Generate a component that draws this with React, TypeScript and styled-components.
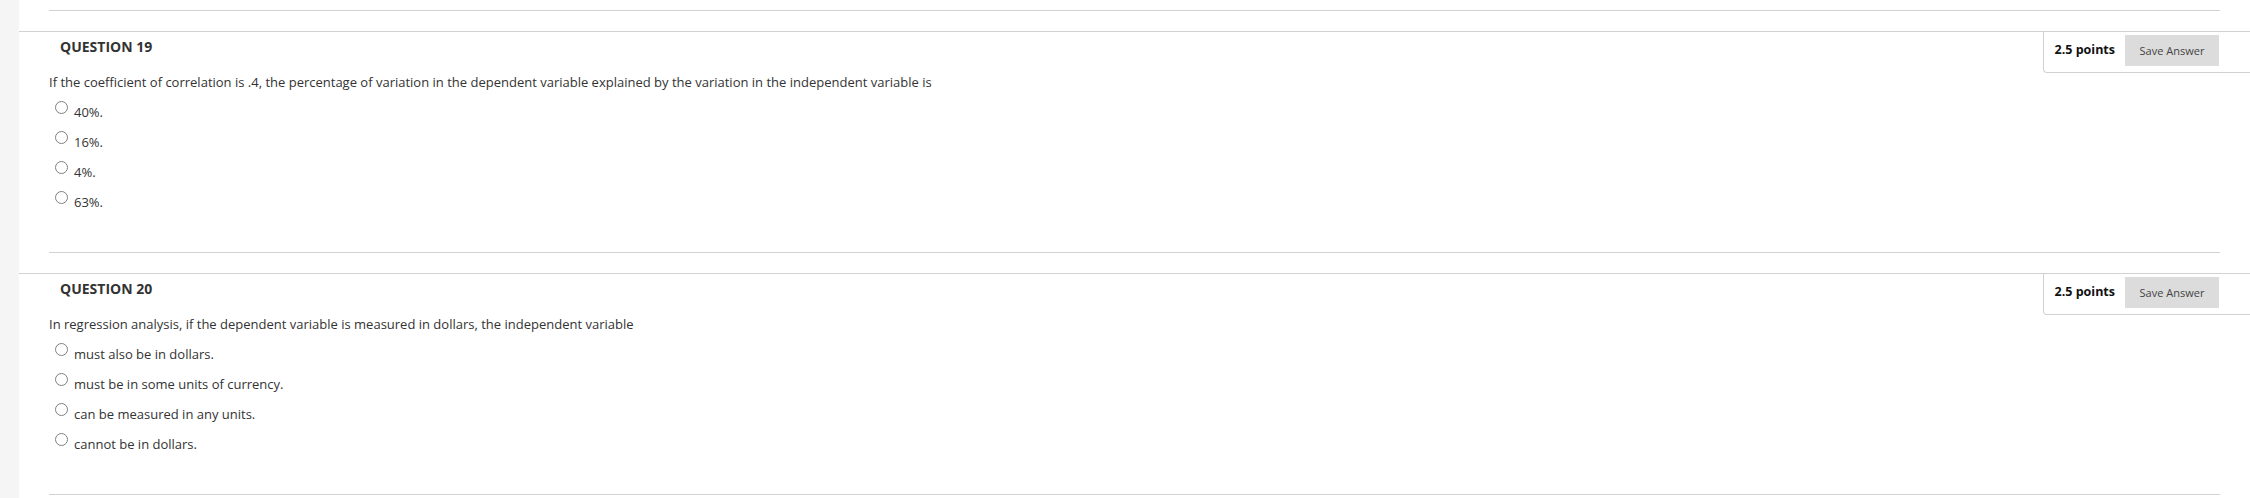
import styled, { createGlobalStyle } from "styled-components";

type Question = {
  number: number;
  points: string;
  text: string;
  options: string[];
};

const questions: Question[] = [
  {
    number: 19,
    points: "2.5 points",
    text: "If the coefficient of correlation is .4, the percentage of variation in the dependent variable explained by the variation in the independent variable is",
    options: ["40%.", "16%.", "4%.", "63%."],
  },
  {
    number: 20,
    points: "2.5 points",
    text: "In regression analysis, if the dependent variable is measured in dollars, the independent variable",
    options: ["must also be in dollars.", "must be in some units of currency.", "can be measured in any units.", "cannot be in dollars."],
  },
];

const GlobalStyle = createGlobalStyle`
  html, body {
    margin: 0;
    padding: 0;
    background: #fff;
  }
  body {
    font-family: "Open Sans", "Liberation Sans", sans-serif;
    color: #333;
  }
`;

export default function App() {
  return (
    <>
      <GlobalStyle />
      <Page>
        <SideStrip />
        <Main>
          <Divider />
          {questions.map(q => (
            <QuestionBlock key={q.number} question={q} />
          ))}
        </Main>
      </Page>
    </>
  );
}

function QuestionBlock({ question }: { question: Question }) {
  return (
    <Section>
      <Header>
        <Title>QUESTION {question.number}</Title>
        <PointsBox>
          <Points>{question.points}</Points>
          <SaveButton>Save Answer</SaveButton>
        </PointsBox>
      </Header>
      <Prompt>{question.text}</Prompt>
      <OptionList>
        {question.options.map(opt => (
          <Option key={opt}>
            <Radio />
            <OptionLabel>{opt}</OptionLabel>
          </Option>
        ))}
      </OptionList>
      <SectionDivider />
    </Section>
  );
}

const Page = styled.div`
  display: flex;
  width: 2250px;
  height: 498px;
  overflow: hidden;
`;

const SideStrip = styled.div`
  width: 19px;
  flex-shrink: 0;
  background: #f5f5f5;
`;

const Main = styled.div`
  flex: 1;
  display: flex;
  flex-direction: column;
  padding-top: 10px;
`;

const Divider = styled.div`
  flex-shrink: 0;
  margin: 0 30px 20px 30px;
  height: 1px;
  background: #d2d2d2;
`;

const Section = styled.section`
  display: flex;
  flex-direction: column;
  flex-shrink: 0;
  box-sizing: border-box;
  height: 222px;
  border-top: 1px solid #d2d2d2;
  padding: 0 30px;
  margin-bottom: 20px;
`;

const Header = styled.div`
  display: flex;
  justify-content: space-between;
  align-items: flex-start;
`;

const Title = styled.h3`
  margin: 0;
  padding: 4.5px 0 0 11px;
  font: 700 14px/20px "Open Sans", "Liberation Sans", sans-serif;
  color: #333;
`;

const PointsBox = styled.div`
  display: flex;
  align-items: flex-start;
  gap: 10px;
  box-sizing: border-box;
  height: 41px;
  margin-right: -30px;
  padding: 3px 31px 0 11px;
  border-left: 1px solid #d2d2d2;
  border-bottom: 1px solid #d2d2d2;
  border-bottom-left-radius: 4px;
`;

const Points = styled.span`
  margin-top: 5.5px;
  font: 700 12.5px/18px "Open Sans", "Liberation Sans", sans-serif;
  color: #111;
`;

const SaveButton = styled.button`
  width: 94px;
  height: 31px;
  border: none;
  padding: 0;
  background: #dcdcdc;
  color: #444;
  font: 400 11px/1 "Open Sans", "Liberation Sans", sans-serif;
`;

const Prompt = styled.p`
  margin: 0;
  font: 400 13px/18px "Open Sans", "Liberation Sans", sans-serif;
  color: #333;
`;

const OptionList = styled.ul`
  list-style: none;
  margin: 10px 0 0 0;
  padding: 0 0 0 6px;
  display: flex;
  flex-direction: column;
  gap: 10px;
`;

const Option = styled.li`
  display: flex;
  align-items: flex-start;
  gap: 6px;
  height: 20px;
`;

const Radio = styled.span`
  width: 13px;
  height: 13px;
  box-sizing: border-box;
  border: 1px solid #808080;
  border-radius: 50%;
  background: #fff;
  flex-shrink: 0;
`;

const OptionLabel = styled.span`
  margin-top: 2px;
  font: 400 13px/18px "Open Sans", "Liberation Sans", sans-serif;
  color: #333;
`;

const SectionDivider = styled.div`
  margin-top: auto;
  height: 1px;
  background: #d2d2d2;
`;
